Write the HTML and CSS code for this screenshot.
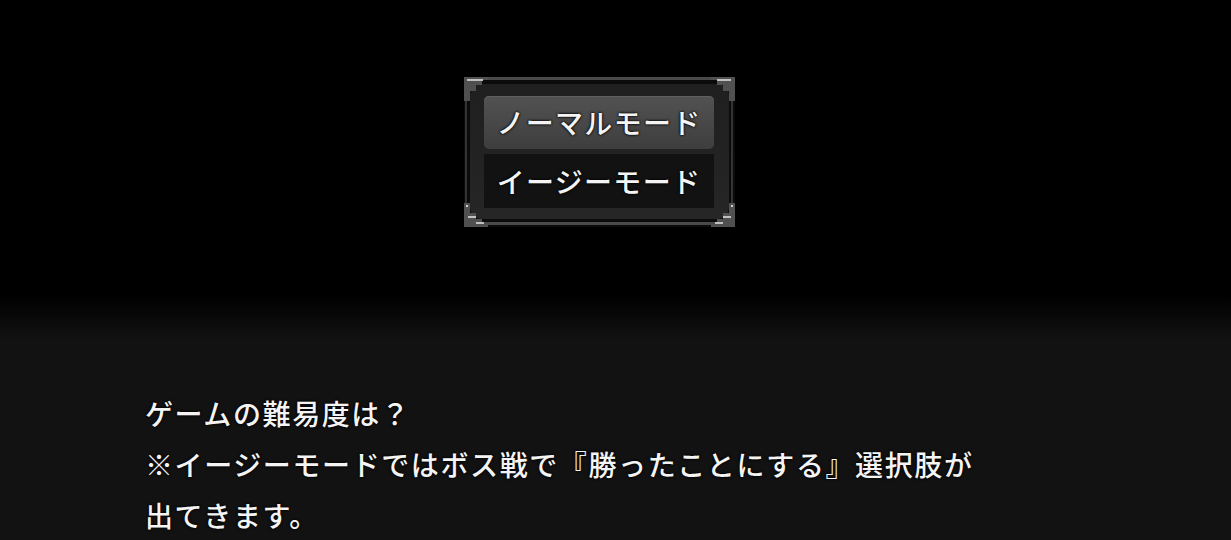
FILE: index.html
```html
<!DOCTYPE html>
<html lang="ja">
<head>
  <meta charset="UTF-8">
  <meta name="viewport" content="width=device-width, initial-scale=1">
  <title>難易度選択</title>
  <link rel="stylesheet" href="styles.css">
</head>
<body>

  <div class="stage">
    <div class="choice-window">
      <svg class="corner tl" width="24" height="24" viewBox="0 0 24 24">
        <polygon points="0,0 24,0 24,3 18,3 18,8 12,8 12,14 6,14 6,24 0,24" fill="#505050"/>
        <rect x="3" y="2" width="16" height="2" fill="#c0c0c0"/>
      </svg>
      <svg class="corner tr" width="24" height="24" viewBox="0 0 24 24">
        <polygon points="0,0 24,0 24,24 18,24 18,14 12,14 12,8 6,8 6,3 0,3" fill="#505050"/>
        <rect x="6" y="2" width="14" height="2" fill="#c0c0c0"/>
      </svg>
      <svg class="corner bl" width="24" height="24" viewBox="0 0 24 24">
        <polygon points="0,0 6,0 6,10 12,10 12,16 18,16 18,21 24,21 24,24 0,24" fill="#505050"/>
        <rect x="2" y="2" width="2" height="2" fill="#d0d0d0"/>
        <rect x="4" y="13" width="8" height="2" fill="#c0c0c0"/>
        <rect x="12" y="19" width="8" height="2" fill="#c0c0c0"/>
      </svg>
      <svg class="corner br" width="24" height="24" viewBox="0 0 24 24">
        <polygon points="24,0 18,0 18,10 12,10 12,16 6,16 6,21 0,21 0,24 24,24" fill="#505050"/>
        <rect x="20" y="2" width="2" height="2" fill="#d0d0d0"/>
        <rect x="12" y="13" width="8" height="2" fill="#c0c0c0"/>
        <rect x="4" y="19" width="8" height="2" fill="#c0c0c0"/>
      </svg>

      <ul class="choices">
        <li class="choice selected">ノーマルモード</li>
        <li class="choice">イージーモード</li>
      </ul>
    </div>
  </div>

  <div class="message">
    <p class="line">ゲームの難易度は？</p>
    <p class="line">※イージーモードではボス戦で『勝ったことにする』選択肢が</p>
    <p class="line">出てきます。</p>
  </div>

</body>
</html>
```

FILE: styles.css
```css
html, body { margin: 0; padding: 0; }
body { width: 1231px; height: 540px; overflow: hidden; background: #000; color: #f4f4f4; font-family: "Noto Sans CJK JP", "Noto Sans", sans-serif; }

.stage { height: 295px; padding-top: 77px; box-sizing: border-box; }

.choice-window { position: relative; width: 271px; height: 150px; margin-left: 464px; box-sizing: border-box; padding: 19px 21px 19px 20px; background: #0b0b0b; }
.choice-window::before { content: ""; position: absolute; left: 1px; right: 2px; top: 0; bottom: 2px; border-top: 3px solid #4a4a4a; border-bottom: 3px solid #4a4a4a; border-left: 2px solid #333; border-right: 2px solid #333; }
.choice-window::after { content: ""; position: absolute; left: 6px; right: 6px; top: 7px; bottom: 8px; border-radius: 12px; background: linear-gradient(#1f1f1f, #262626); }

.corner { position: absolute; z-index: 2; }
.corner.tl { left: 0; top: 0; }
.corner.tr { right: 0; top: 0; }
.corner.bl { left: 0; bottom: 0; }
.corner.br { right: 0; bottom: 0; }

.choices { position: relative; z-index: 1; list-style: none; margin: 0; padding: 0; display: flex; flex-direction: column; gap: 5px; }
.choice { height: 54px; line-height: 54px; text-align: center; font-size: 28px; font-weight: 500; letter-spacing: 1.3px; background: #121212; text-shadow: 0 0 2px #000, 0 0 3px #000; }
.choice.selected { height: 53px; line-height: 52px; border-radius: 5px; background: linear-gradient(#525252, #464646 60%, #3e3e3e); box-shadow: inset 0 1px 0 #5e5e5e; }

.message { height: 245px; box-sizing: border-box; padding: 93px 0 0 145px; background: linear-gradient(#000 0, #121212 45px); }
.line { margin: 0; font-size: 28px; font-weight: 500; line-height: 51px; letter-spacing: 1.6px; white-space: nowrap; text-shadow: 0 0 2px #000, 0 0 3px #000; }
```
